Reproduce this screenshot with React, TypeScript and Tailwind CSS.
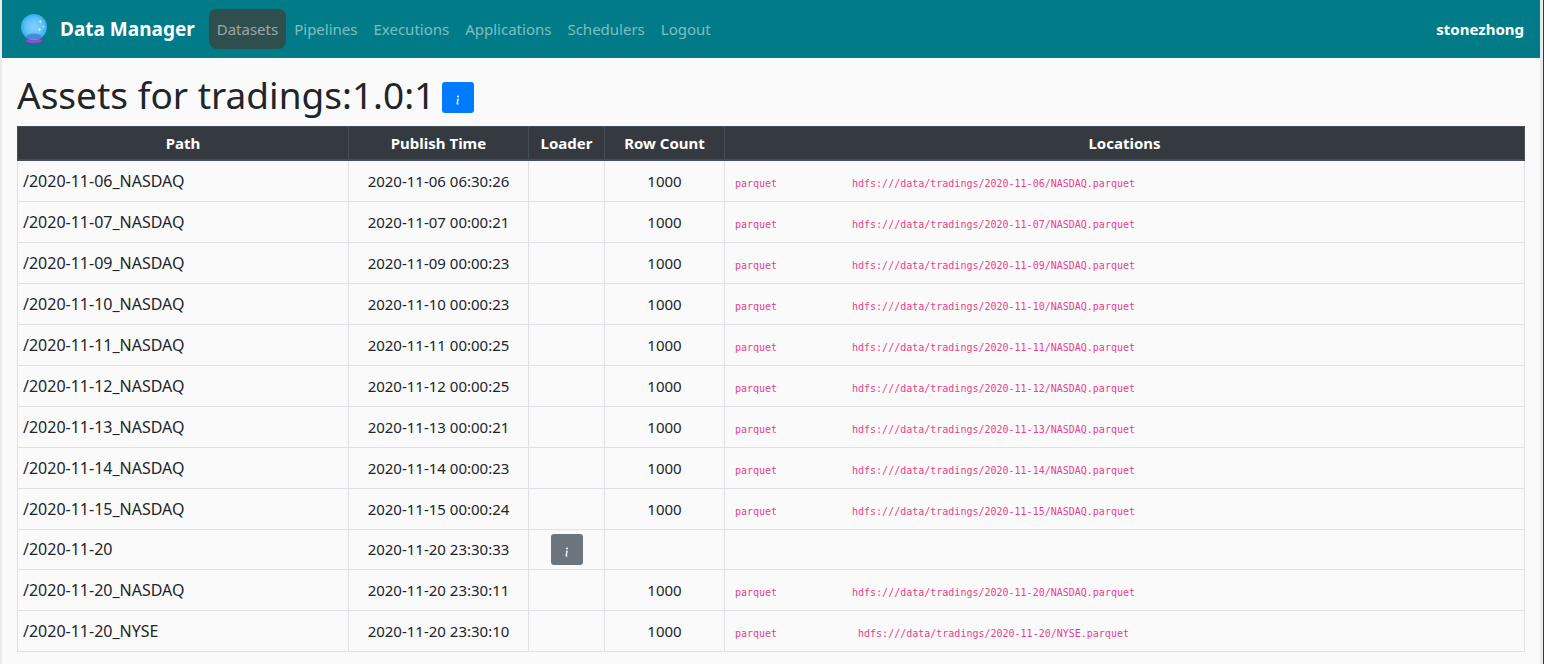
import React from "react";
import { BsInfo } from "react-icons/bs";

type Location = { format: string; uri: string };

type Asset = {
  path: string;
  published: string;
  hasLoader?: boolean;
  rowCount?: number;
  location?: Location;
};

function stored(date: string, exchange: string, time: string): Asset {
  return {
    path: `/${date}_${exchange}`,
    published: `${date} ${time}`,
    rowCount: 1000,
    location: {
      format: "parquet",
      uri: `hdfs:///data/tradings/${date}/${exchange}.parquet`,
    },
  };
}

const assets: Asset[] = [
  stored("2020-11-06", "NASDAQ", "06:30:26"),
  stored("2020-11-07", "NASDAQ", "00:00:21"),
  stored("2020-11-09", "NASDAQ", "00:00:23"),
  stored("2020-11-10", "NASDAQ", "00:00:23"),
  stored("2020-11-11", "NASDAQ", "00:00:25"),
  stored("2020-11-12", "NASDAQ", "00:00:25"),
  stored("2020-11-13", "NASDAQ", "00:00:21"),
  stored("2020-11-14", "NASDAQ", "00:00:23"),
  stored("2020-11-15", "NASDAQ", "00:00:24"),
  { path: "/2020-11-20", published: "2020-11-20 23:30:33", hasLoader: true },
  stored("2020-11-20", "NASDAQ", "23:30:11"),
  stored("2020-11-20", "NYSE", "23:30:10"),
];

const navItems = ["Datasets", "Pipelines", "Executions", "Applications", "Schedulers", "Logout"];

function CrystalBall() {
  return (
    <svg viewBox="0 0 32 32" className="size-8" aria-hidden="true">
      <defs>
        <radialGradient id="ball" cx="50%" cy="50%" r="50%">
          <stop offset="0" stopColor="#7fd0fb" />
          <stop offset="0.6" stopColor="#64c4f8" />
          <stop offset="1" stopColor="#35aef0" />
        </radialGradient>
      </defs>
      <path d="M9 23 Q7 25 7.200 28 C8 30.400 12 31 16 31 S24 30.400 24.800 28 Q25 25 23 23Z" fill="#6a3fae" />
      <ellipse cx="16" cy="27.800" rx="8" ry="2.300" fill="#7e57c2" />
      <circle cx="16" cy="14" r="13" fill="url(#ball)" />
      <ellipse cx="16" cy="23.400" rx="7.600" ry="2.800" fill="#4a80cf" opacity="0.85" />
      <g fill="#d5f0b4">
        <path d="M22.300 6.400l.6 1.500 1.500.6-1.500.6-.6 1.500-.6-1.500-1.500-.6 1.500-.6z" />
        <path d="M21.400 14.500l.6 1.500 1.500.6-1.500.6-.6 1.500-.6-1.500-1.500-.6 1.500-.6z" />
        <path d="M25.600 12.200l.4 1 1 .4-1 .4-.4 1-.4-1-1-.4 1-.4z" />
      </g>
    </svg>
  );
}

function InfoButton({ label, tone }: { label: string; tone: string }) {
  return (
    <button
      type="button"
      aria-label={label}
      className={`inline-flex h-[31px] w-8 items-end justify-center rounded-[3px] pb-[5px] text-white ${tone}`}
    >
      <BsInfo size={16} />
    </button>
  );
}

function NavBar() {
  return (
    <header className="flex h-[58px] items-center bg-[#007b87] px-4">
      <a href="#home" className="mr-[14px] flex items-center gap-[10px] text-[19px] font-bold text-white">
        <CrystalBall />
        Data Manager
      </a>
      <nav className="flex flex-1 items-center">
        {navItems.map((item) => (
          <a
            key={item}
            href={`#${item.toLowerCase()}`}
            className={`rounded-lg px-2 py-2 leading-6 text-white/50 ${item === "Datasets" ? "bg-[#2f4f4f]" : ""}`}
          >
            {item}
          </a>
        ))}
      </nav>
      <span className="font-bold text-white">stonezhong</span>
    </header>
  );
}

const headCell = "border border-[#454d55] border-b-2 py-1 font-bold";
const cell = "border border-[#dee2e6]";

function AssetTable() {
  return (
    <table className="w-full table-fixed border-collapse text-center leading-6">
      <colgroup>
        <col className="w-[331px]" />
        <col className="w-[180px]" />
        <col className="w-[76px]" />
        <col className="w-[120px]" />
        <col />
      </colgroup>
      <thead className="bg-[#343a40] text-white">
        <tr>
          <th className={headCell}>Path</th>
          <th className={headCell}>Publish Time</th>
          <th className={headCell}>Loader</th>
          <th className={headCell}>Row Count</th>
          <th className={headCell}>Locations</th>
        </tr>
      </thead>
      <tbody>
        {assets.map((asset) => (
          <tr key={asset.path} className={asset.hasLoader ? "h-10" : "h-[41px]"}>
            <td className={`${cell} px-[5px] text-left text-[16px] leading-6`}>{asset.path}</td>
            <td className={cell}>{asset.published}</td>
            <td className={cell}>
              {asset.hasLoader && (
                <div className="flex justify-center">
                  <InfoButton label="Show loader" tone="bg-[#6c757d]" />
                </div>
              )}
            </td>
            <td className={cell}>{asset.rowCount}</td>
            <td className={cell}>
              {asset.location && (
                <div className="flex px-[10px] pt-[6px] font-['DejaVu_Sans_Mono',monospace] text-[10px] leading-5 text-[#e83e8c]">
                  <code className="w-[114px] text-left font-[inherit]">{asset.location.format}</code>
                  <code className="w-[289px] text-center font-[inherit]">{asset.location.uri}</code>
                </div>
              )}
            </td>
          </tr>
        ))}
      </tbody>
    </table>
  );
}

export default function App() {
  return (
    <div className="border-r border-[#3a3a38] font-['Noto_Sans',sans-serif] text-[15px] text-[#212529]">
      <div className="min-h-screen border-r-3 border-l-2 border-[#e9ecef] bg-[#fafafa]">
        <NavBar />
        <main className="px-[15px] pt-[13px] pb-3">
          <div className="mb-[7px] flex items-center gap-[7px]">
            <h1 className="text-[37px] leading-[48px]">Assets for tradings:1.0:1</h1>
            <div className="flex pt-1">
              <InfoButton label="Dataset details" tone="bg-[#007bff]" />
            </div>
          </div>
          <AssetTable />
        </main>
      </div>
    </div>
  );
}
